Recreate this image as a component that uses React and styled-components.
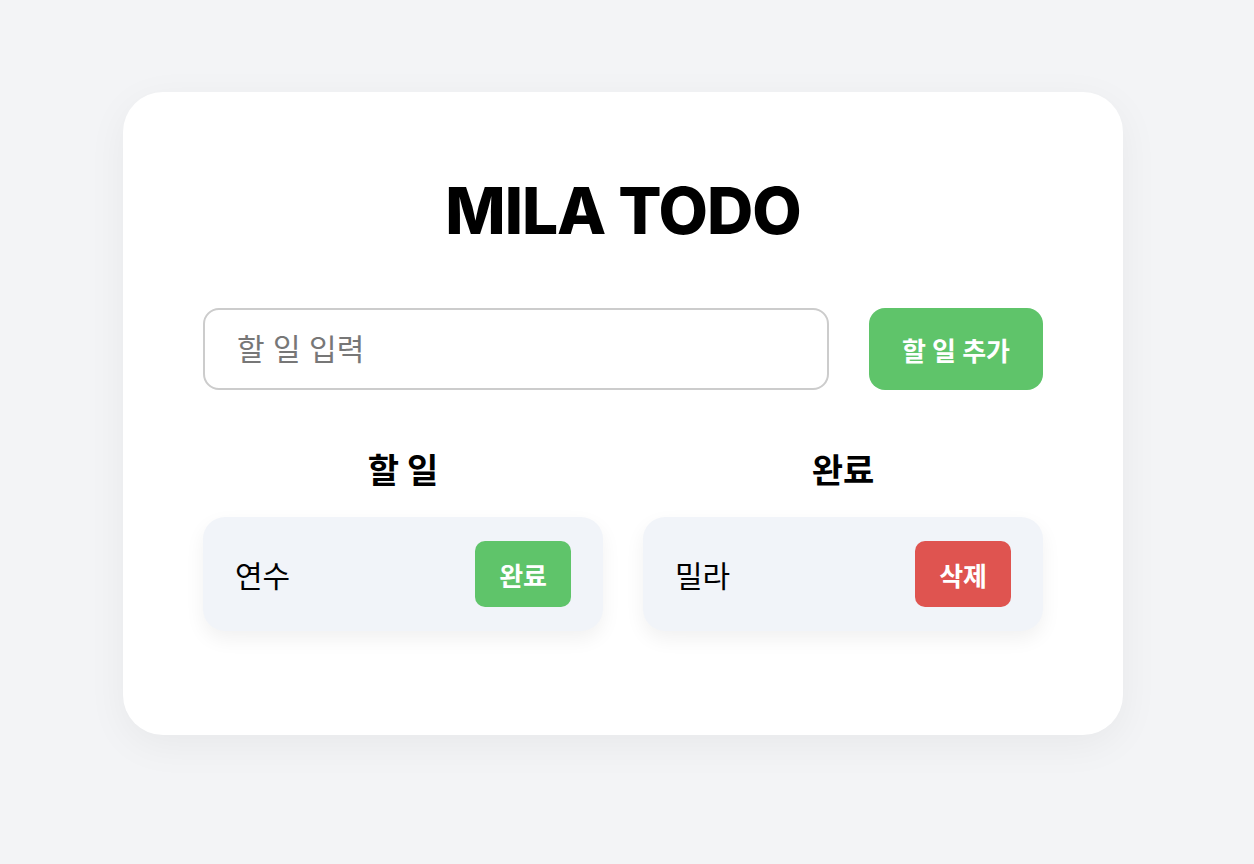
import React, { useState } from 'react'
import styled, { createGlobalStyle } from 'styled-components'

const GlobalStyle = createGlobalStyle`
  * {
    box-sizing: border-box;
  }
  body {
    margin: 0;
    background: #f3f4f6;
    font-family: Inter, 'Noto Sans CJK KR', 'Noto Sans', sans-serif;
    color: #000;
  }
`

function App() {
  const [text, setText] = useState('')
  const [todos, setTodos] = useState([{ id: 1, text: '연수' }])
  const [done, setDone] = useState([{ id: 2, text: '밀라' }])

  const addHandler = () => {
    if (!text.trim()) return
    setTodos([...todos, { id: Date.now(), text }])
    setText('')
  }
  const completeHandler = (item) => {
    setTodos(todos.filter((t) => t.id !== item.id))
    setDone([...done, item])
  }
  const deleteHandler = (item) => {
    setDone(done.filter((t) => t.id !== item.id))
  }

  return (
    <Page>
      <GlobalStyle />
      <Card>
        <Title>MILA TODO</Title>
        <InputRow>
          <TodoInput
            placeholder='할 일 입력'
            value={text}
            onChange={(e) => setText(e.target.value)}
          />
          <ActionButton onClick={addHandler}>할 일 추가</ActionButton>
        </InputRow>
        <Columns>
          <Column>
            <ColumnTitle>할 일</ColumnTitle>
            {todos.map((item) => (
              <Item key={item.id}>
                <span>{item.text}</span>
                <SmallButton onClick={() => completeHandler(item)}>완료</SmallButton>
              </Item>
            ))}
          </Column>
          <Column>
            <ColumnTitle>완료</ColumnTitle>
            {done.map((item) => (
              <Item key={item.id}>
                <span>{item.text}</span>
                <SmallButton danger onClick={() => deleteHandler(item)}>
                  삭제
                </SmallButton>
              </Item>
            ))}
          </Column>
        </Columns>
      </Card>
    </Page>
  )
}

const Page = styled.div`
  display: flex;
  justify-content: center;
  align-items: flex-start;
  min-height: 100vh;
  padding: 92px 8px 0 0;
`

const Card = styled.div`
  width: 1000px;
  background: #fff;
  border-radius: 40px;
  padding: 80px 80px 104px;
  box-shadow: 0 10px 40px rgba(0, 0, 0, 0.05);
`

const Title = styled.h1`
  margin: 0 0 59px;
  text-align: center;
  font-size: 64px;
  font-weight: 800;
  letter-spacing: -1px;
`

const InputRow = styled.div`
  display: flex;
  gap: 40px;
  height: 82px;
`

const TodoInput = styled.input`
  flex: 1;
  border: 2px solid #cccccc;
  border-radius: 16px;
  padding: 0 32px;
  font-family: inherit;
  font-size: 30px;
  outline: none;
  &::placeholder {
    color: #777;
  }
`

const ActionButton = styled.button`
  border: none;
  border-radius: 16px;
  background: #5fc46a;
  color: #fff;
  font-family: inherit;
  font-size: 26px;
  font-weight: 700;
  padding: 0 33px;
  cursor: pointer;
`

const Columns = styled.div`
  display: grid;
  grid-template-columns: 1fr 1fr;
  gap: 40px;
  margin-top: 54px;
`

const Column = styled.div`
  display: flex;
  flex-direction: column;
  gap: 16px;
`

const ColumnTitle = styled.h2`
  margin: 0 0 8px;
  text-align: center;
  font-size: 34px;
  font-weight: 700;
`

const Item = styled.div`
  display: flex;
  align-items: center;
  justify-content: space-between;
  background: #f1f4f9;
  border-radius: 22px;
  padding: 24px 32px;
  font-size: 30px;
  box-shadow: 0 8px 20px rgba(0, 0, 0, 0.06);
`

const SmallButton = styled.button`
  border: none;
  border-radius: 10px;
  height: 66px;
  padding: 0 24px;
  background: ${(props) => (props.danger ? '#df5450' : '#5fc46a')};
  color: #fff;
  font-family: inherit;
  font-size: 26px;
  font-weight: 700;
  cursor: pointer;
`

export default App
